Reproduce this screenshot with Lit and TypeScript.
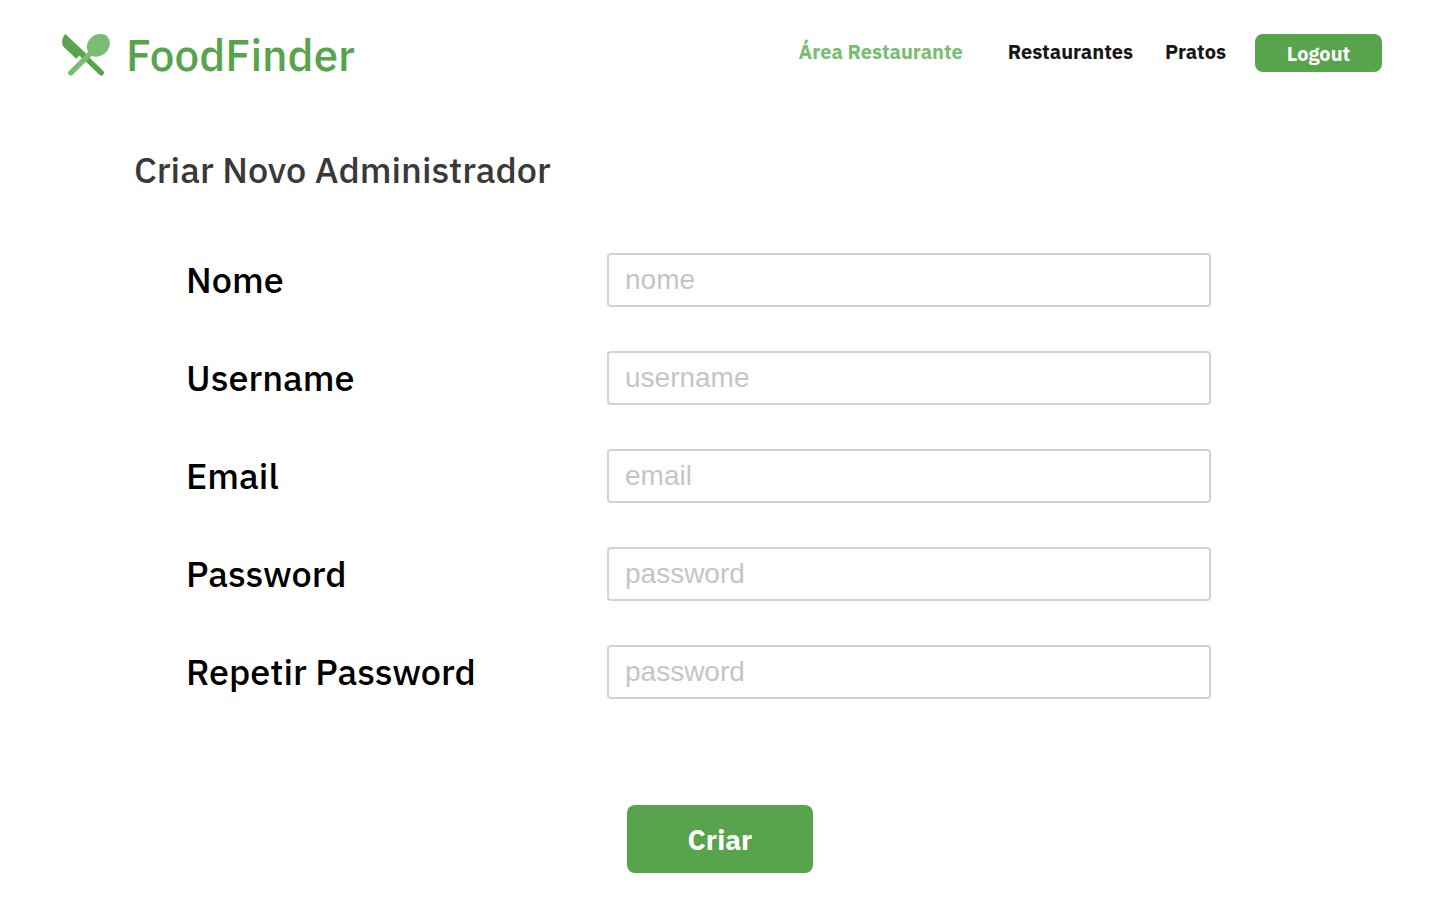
import { LitElement, html, css } from "lit";
import { customElement } from "lit/decorators.js";

interface Field {
  id: string;
  label: string;
  type: string;
  placeholder: string;
}

const FIELDS: Field[] = [
  { id: "nome", label: "Nome", type: "text", placeholder: "nome" },
  { id: "username", label: "Username", type: "text", placeholder: "username" },
  { id: "email", label: "Email", type: "email", placeholder: "email" },
  { id: "password", label: "Password", type: "password", placeholder: "password" },
  { id: "repetir", label: "Repetir Password", type: "password", placeholder: "password" },
];

@customElement("food-header")
export class FoodHeader extends LitElement {
  static styles = css`
    :host {
      display: block;
    }
    .bar {
      display: flex;
      justify-content: space-between;
      align-items: flex-start;
      padding: 28px 58px 0 62px;
    }
    .brand {
      display: flex;
      align-items: center;
      gap: 16px;
      color: #58a44d;
      font-size: 44px;
      line-height: 54px;
      font-weight: 500;
      text-decoration: none;
    }
    .logo {
      width: 48px;
      height: 42px;
    }
    .nav {
      display: flex;
      align-items: flex-start;
      padding-top: 6px;
      font-size: 20px;
      line-height: 36px;
      font-weight: 700;
    }
    .link {
      color: #161616;
      text-decoration: none;
      margin-right: 32px;
    }
    .link:last-of-type {
      margin-right: 29px;
    }
    .area {
      color: #79bd73;
      margin-right: 45px;
    }
    .logout {
      width: 127px;
      height: 38px;
      padding: 2px 0 0;
      border: 0;
      border-radius: 8px;
      background: #58a44d;
      color: #fff;
      font: inherit;
      line-height: 36px;
      cursor: pointer;
    }
  `;

  render() {
    return html`
      <header class="bar">
        <a class="brand" href="#">
          <svg class="logo" viewBox="0 0 48 42" aria-hidden="true">
            <path
              fill="#58a44d"
              d="M3.4 0 L25 20.6 L20 24.6 L17.6 21.6 L14.2 24.8 L1.2 12.4 C-0.8 8.6 0 3.4 3.4 0Z"
            />
            <path
              d="M21.5 21.6 L39.2 38.8"
              fill="none"
              stroke="#58a44d"
              stroke-width="5.4"
              stroke-linecap="round"
            />
            <path
              d="M30 17.8 L8.8 38.8"
              fill="none"
              stroke="#79bd73"
              stroke-width="5.4"
              stroke-linecap="round"
            />
            <path
              fill="#79bd73"
              d="M26.6 18.8 C23.5 13.8 24.9 7.2 29.2 3.4 C33.8 -0.6 41.6 -1.1 45.3 2.4 C49.1 6.1 48.5 12.9 44.9 17.2 C41.1 21.9 34.2 24.3 29.4 21.4Z"
            />
          </svg>
          <span>FoodFinder</span>
        </a>
        <nav class="nav">
          <a class="link area" href="#">Área Restaurante</a>
          <a class="link" href="#">Restaurantes</a>
          <a class="link" href="#">Pratos</a>
          <button class="logout" type="button">Logout</button>
        </nav>
      </header>
    `;
  }
}

@customElement("app-root")
export class AppRoot extends LitElement {
  static styles = css`
    :host {
      display: block;
      background: #fff;
      font-family: "IBM Plex Sans Text", "IBM Plex Sans", Roboto, "Noto Sans", sans-serif;
    }
    .title {
      margin: 0;
      padding: 64px 134px 0;
      color: #393939;
      font-size: 36px;
      line-height: 48px;
      font-weight: 500;
    }
    .form {
      display: flex;
      flex-direction: column;
      gap: 44px;
      padding: 59px 229px 27px 186px;
    }
    .row {
      display: grid;
      grid-template-columns: 421fr 604fr;
      align-items: center;
    }
    .label {
      color: #000;
      font-size: 36px;
      line-height: 48px;
      font-weight: 500;
    }
    .input {
      box-sizing: border-box;
      width: 100%;
      height: 54px;
      padding: 0 16px;
      border: 2px solid #d0d4d8;
      border-radius: 4px;
      background: #fff;
      color: #161616;
      font-family: "Liberation Sans", Arial, sans-serif;
      font-size: 28px;
    }
    .input::placeholder {
      color: #c1c7c7;
      opacity: 1;
    }
    .actions {
      display: flex;
      justify-content: center;
      margin: 62px -43px 0 0;
    }
    .submit {
      width: 186px;
      height: 68px;
      padding: 0;
      border: 0;
      border-radius: 8px;
      background: #58a44d;
      color: #fff;
      font-family: inherit;
      font-size: 28px;
      font-weight: 700;
      cursor: pointer;
    }
  `;

  render() {
    return html`
      <food-header></food-header>
      <main>
        <h1 class="title">Criar Novo Administrador</h1>
        <form class="form" @submit=${(e: Event) => e.preventDefault()}>
          ${FIELDS.map(
            (f) => html`
              <div class="row">
                <label class="label" for=${f.id}>${f.label}</label>
                <input
                  class="input"
                  id=${f.id}
                  name=${f.id}
                  type=${f.type}
                  placeholder=${f.placeholder}
                />
              </div>
            `
          )}
          <div class="actions">
            <button class="submit" type="submit">Criar</button>
          </div>
        </form>
      </main>
    `;
  }
}
